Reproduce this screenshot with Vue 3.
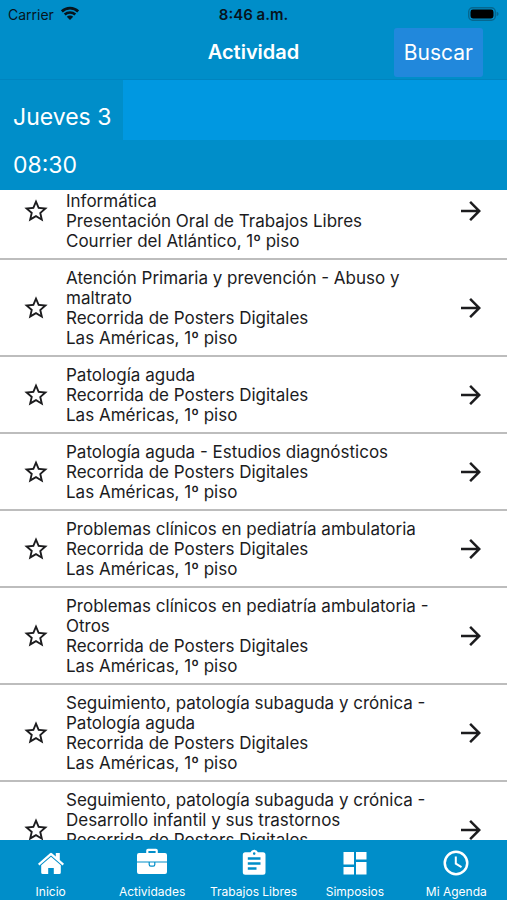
<template>
  <div class="app">
    <header>
      <div class="status">
        <div class="carrier">
          <span>Carrier</span>
          <svg width="18" height="14" viewBox="0 0 18 14">
            <path d="M.8 5.4a11.8 11.8 0 0 1 16.4 0" fill="none" stroke="#07141c" stroke-width="2.8" />
            <path d="M3.7 8.5a7.7 7.7 0 0 1 10.600 0" fill="none" stroke="#07141c" stroke-width="2.500" />
            <path d="M9 14 5.800 10.700a4.600 4.600 0 0 1 6.400 0z" fill="#07141c" />
          </svg>
        </div>
        <strong>8:46 a.m.</strong>
        <svg class="battery" width="31" height="14" viewBox="0 0 31 14">
          <rect x=".7" y=".7" width="26.6" height="12.6" rx="4" fill="none" stroke="#06678f" stroke-width="1.4" />
          <rect x="2.5" y="2.5" width="23" height="9" rx="2.4" fill="#000" />
          <path d="M28.6 4.8q2 .6 2 2.2t-2 2.2z" fill="#06678f" />
        </svg>
      </div>
      <div class="navbar">
        <h1>Actividad</h1>
        <button type="button" class="search">Buscar</button>
      </div>
    </header>

    <div class="days">
      <button type="button" class="day">Jueves 3</button>
    </div>
    <h2 class="hour">08:30</h2>

    <ul ref="list" class="sessions">
      <li v-for="s in sessions" :key="s.id" class="session" :class="{ continued: s.continued }">
        <button type="button" class="icon-btn" aria-label="Favorito">
          <svg width="28" height="28" viewBox="0 0 24 24" fill="#1c1c1e">
            <path d="M22 9.24l-7.19-.62L12 2 9.19 8.63 2 9.24l5.46 4.73L5.82 21 12 17.27 18.18 21l-1.63-7.03L22 9.24zM12 15.4l-3.76 2.27 1-4.28-3.32-2.88 4.38-.38L12 6.1l1.71 4.04 4.38.38-3.32 2.88 1 4.28L12 15.4z" />
          </svg>
        </button>
        <div class="info">
          <div>{{ s.title }}</div>
          <div>{{ s.type }}</div>
          <div>{{ s.place }}</div>
        </div>
        <button type="button" class="icon-btn" aria-label="Ver">
          <svg width="30" height="30" viewBox="0 0 24 24" fill="#1c1c1e">
            <path d="M12 4l-1.41 1.41L16.17 11H4v2h12.17l-5.58 5.59L12 20l8-8z" />
          </svg>
        </button>
      </li>
    </ul>

    <nav class="tabs">
      <a v-for="t in tabs" :key="t.label" href="#" class="tab">
        <svg width="32" height="32" viewBox="0 0 32 32" fill="#fff">
          <path v-for="d in t.paths" :key="d" :d="d" fill-rule="evenodd" />
        </svg>
        <span>{{ t.label }}</span>
      </a>
    </nav>
  </div>
</template>

<script setup>
import { onMounted, ref } from 'vue'

const list = ref(null)

const posters = 'Recorrida de Posters Digitales'
const americas = 'Las Américas, 1º piso'

const sessions = [
  { id: 1, title: 'Informática', type: 'Presentación Oral de Trabajos Libres', place: 'Courrier del Atlántico, 1º piso', continued: true },
  { id: 2, title: 'Atención Primaria y prevención - Abuso y maltrato', type: posters, place: americas },
  { id: 3, title: 'Patología aguda', type: posters, place: americas },
  { id: 4, title: 'Patología aguda - Estudios diagnósticos', type: posters, place: americas },
  { id: 5, title: 'Problemas clínicos en pediatría ambulatoria', type: posters, place: americas },
  { id: 6, title: 'Problemas clínicos en pediatría ambulatoria - Otros', type: posters, place: americas },
  { id: 7, title: 'Seguimiento, patología subaguda y crónica - Patología aguda', type: posters, place: americas },
  { id: 8, title: 'Seguimiento, patología subaguda y crónica - Desarrollo infantil y sus trastornos', type: posters, place: americas },
]

const tabs = [
  {
    label: 'Inicio',
    paths: [
      'M15 6.2q1-.9 2 0l3.800 3.300V6h4v7.100l4.200 3.700-1.400 1.600L16 8.400 4.400 18.400 3 16.800z',
      'M16 9.800 25.800 18.200v7.200q0 1.600-1.600 1.600h-5.400v-6h-5.600v6H7.800q-1.600 0-1.600-1.600v-7.200z',
    ],
  },
  {
    label: 'Actividades',
    paths: [
      'M10.200 6V3.600q0-1.800 1.800-1.800h8q1.800 0 1.800 1.800V6H29q2 0 2 2v6.500H1V8q0-2 2-2zM12.400 6h7.200V4h-7.200z',
      'M1 15.600h11.600v1.900q0 2.300 2.200 2.300h2.400q2.200 0 2.200-2.300v-1.900H31V25q0 2-2 2H3q-2 0-2-2z',
      'M13.800 15.600h4.400v2q0 1-1 1h-2.400q-1 0-1-1z',
    ],
  },
  {
    label: 'Trabajos Libres',
    paths: [
      'M25 5.3h-5.1a3.9 3.9 0 0 0-7.4 0H7.3A2.5 2.5 0 0 0 4.8 7.8v17.4a2.5 2.5 0 0 0 2.5 2.5H25a2.5 2.5 0 0 0 2.5-2.5V7.8A2.5 2.5 0 0 0 25 5.3zM16.2 5.3a1.3 1.3 0 1 1 0 2.6 1.3 1.3 0 0 1 0-2.6zM18.5 22.7H9.8v-2.5h8.7zM22.5 17.7H9.8v-2.5h12.7zM22.5 12.7H9.8v-2.5h12.7z',
    ],
  },
  {
    label: 'Simposios',
    paths: ['M4.5 5H15v12.5H4.5zM4.5 20H15v7.5H4.5zM17 15h10.5v12.5H17zM17 5h10.5v7.5H17z'],
  },
  {
    label: 'Mi Agenda',
    paths: [
      'M16 3.5a12.5 12.5 0 1 0 0 25 12.5 12.5 0 0 0 0-25zM16 6a10 10 0 1 1 0 20 10 10 0 0 1 0-20z',
      'M14.8 9.5h2v6.6l5.2 3.2-1 1.7-6.2-3.8z',
    ],
  },
]

onMounted(() => {
  // start just past the first line of the running session
  list.value.scrollTop = 27
})
</script>

<style>
body { margin: 0; }
</style>

<style scoped>
.app { display: flex; flex-direction: column; height: 100vh; background: #fff; color: #1c1c1e; font-family: Inter, "Liberation Sans", sans-serif; }
button { border: 0; padding: 0; background: none; color: inherit; font: inherit; }

header { background: #008ec9; border-bottom: 1px solid #0084bf; }
.status { display: grid; grid-template-columns: 1fr auto 1fr; align-items: center; height: 28px; padding: 0 8px; font-size: 14px; color: #07141c; }
.carrier { display: flex; align-items: center; gap: 7px; }
.carrier svg { margin-bottom: 2px; }
.status strong { font-weight: 600; font-size: 15px; }
.battery { justify-self: end; }
.navbar { display: grid; grid-template-columns: 1fr auto 1fr; align-items: start; height: 51px; padding: 0 24px; color: #fff; }
h1 { grid-column: 2; margin: 0; font-size: 20px; font-weight: 600; line-height: 49px; }
.search { justify-self: end; height: 49px; padding: 0 10px; border-radius: 3px; background: #2188dc; font-size: 21px; }

.days { display: flex; background: #0098e1; }
.day { height: 60px; padding: 13px 12px 0 13px; background: #008ec9; color: #fff; font-size: 23px; }
.hour { margin: 0; padding: 0 13px; background: #008ec9; color: #fff; font-size: 23px; font-weight: 400; line-height: 50px; }

.sessions { flex: 1; min-height: 0; margin: 0; padding: 0; list-style: none; overflow-y: auto; scrollbar-width: none; }
.session { display: flex; align-items: center; padding: 8px 21px 7px 22px; border-bottom: 2px solid #bdbdbd; font-size: 17px; line-height: 20px; }
.info { flex: 1; margin: 0 20px 0 16px; }
.continued .info { padding-top: 20px; }
.icon-btn { display: flex; }

.tabs { display: flex; background: #008ec9; }
.tab { flex: 1; display: flex; flex-direction: column; align-items: center; justify-content: space-between; height: 60px; padding-top: 7px; box-sizing: border-box; color: #fff; font-size: 12px; line-height: 16px; text-decoration: none; }
</style>
